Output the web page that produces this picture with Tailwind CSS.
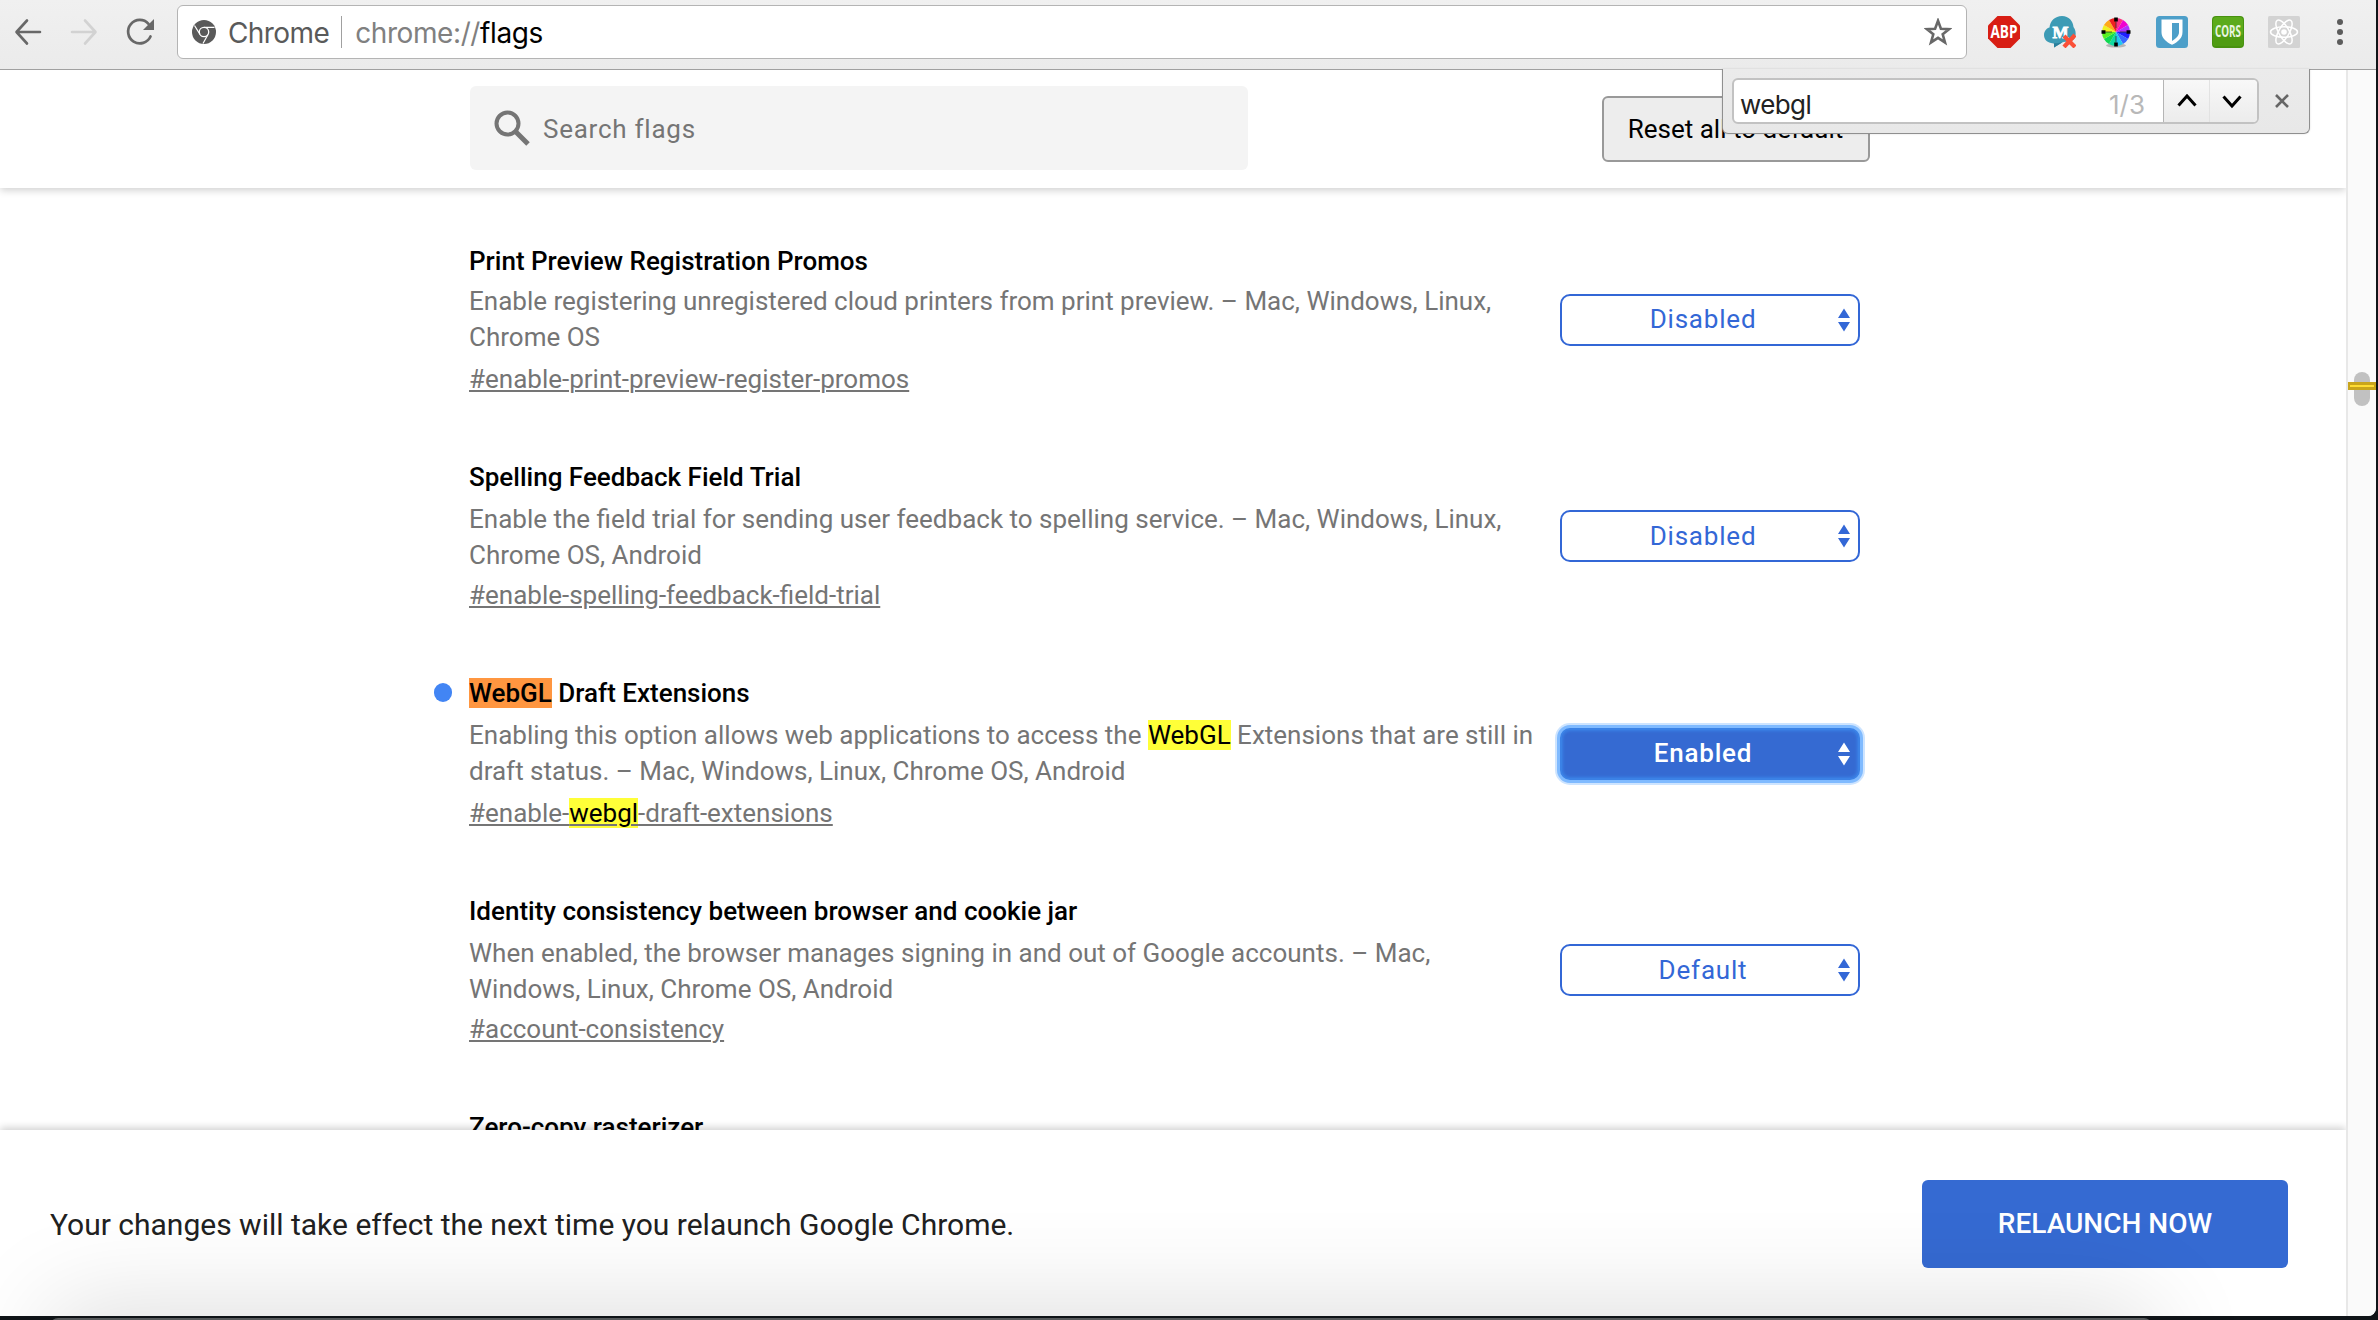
<!DOCTYPE html>
<html lang="en">
<head>
<meta charset="utf-8">
<title>chrome://flags</title>
<script src="https://cdn.jsdelivr.net/npm/@tailwindcss/browser@4"></script>
</head>
<body class="relative flex h-[1320px] w-[2378px] flex-col overflow-hidden bg-[#101418] font-['Roboto',sans-serif] text-[26px]">

<!-- Browser toolbar -->
<div class="flex h-[70px] w-[2376px] shrink-0 items-start border-b border-[#a0a0a0] bg-linear-to-b from-[#f0f0f0] to-[#ebebeb] font-['Inter',sans-serif] text-[28px]">
  <div class="flex h-16 w-[177px] shrink-0 items-center pl-[14px]">
    <svg class="h-7 w-7" viewBox="0 0 28 28" fill="none" stroke="#686868" stroke-width="2.6" stroke-linecap="round" stroke-linejoin="round"><path d="M26 14H3M13 2.5L2.5 14L13 25.500"/></svg>
    <svg class="ml-7 h-7 w-7" viewBox="0 0 28 28" fill="none" stroke="#d2d2d2" stroke-width="2.600" stroke-linecap="round" stroke-linejoin="round"><path d="M2 14H25M15 2.5L25.500 14L15 25.500"/></svg>
    <svg class="ml-7 h-7 w-7" viewBox="0 0 28 28" fill="none"><path d="M24.500 18.500A11.700 11.700 0 1 1 22.500 5.800" stroke="#686868" stroke-width="2.700" stroke-linecap="round"/><path d="M28 1V12H17Z" fill="#686868"/></svg>
  </div>
  <div class="mt-[5px] flex h-[54px] w-[1790px] shrink-0 items-center rounded-md border border-[#b4b4b4] bg-white pl-[14px] pr-[14px]">
    <svg class="h-6 w-6" viewBox="0 0 24 24"><circle cx="12" cy="12" r="12" fill="#5a5a5a"/><circle cx="12" cy="12" r="4.700" fill="#5a5a5a" stroke="#fff" stroke-width="1.300"/><path d="M12 7.300H22.500M8 14.400L2.500 5.500M16 14.500L11 23.500" stroke="#fff" stroke-width="1.200" fill="none"/></svg>
    <span class="ml-[12px] pt-0.5 tracking-[-0.6px] text-[#5a5a5a]">Chrome</span>
    <span class="ml-[12px] h-8 w-px bg-[#a0a0a0]"></span>
    <span class="ml-[13px] pt-0.5 tracking-[-0.4px] text-[#808080]">chrome://<span class="text-black">flags</span></span>
    <svg class="ml-auto h-7 w-7" viewBox="0 0 28 28"><path d="M14 2.800L16.900 10.700L25.200 11.100L18.700 16.300L21 24.400L14 19.800L7 24.400L9.300 16.300L2.800 11.100L11.100 10.700Z" fill="none" stroke="#686868" stroke-width="2.600"/></svg>
  </div>
  <div class="ml-[21px] mt-4 flex gap-6">
    <svg class="h-8 w-8" viewBox="0 0 32 32"><path d="M9.500 0H22.500L32 9.500V22.500L22.500 32H9.500L0 22.500V9.500Z" fill="#d81e14"/><text x="16" y="22" text-anchor="middle" textLength="27" lengthAdjust="spacingAndGlyphs" font-family="Open Sans" font-weight="700" font-size="17" fill="#fff">ABP</text></svg>
    <svg class="h-8 w-8" viewBox="0 0 32 32"><path d="M7 27C2 26 0 22.500 0 19C0 15 3 12 5.500 11.500C6 5 11 0 18 0C25 0 29 5 29.500 11C31.500 14 32 16 31.500 20C30 25 26 25 19 26L10 31.500L10 27.500Z" fill="#3d9bb5"/><path d="M7 27C14 28 24 26 31 21C30 25 26 25 19 26L10 31.500L10 27.500Z" fill="#2b7f9c"/><text x="16.500" y="21.500" text-anchor="middle" font-family="Liberation Serif" font-weight="700" font-size="17" fill="#fff" stroke="#fff" stroke-width=".8">M</text><path d="M20 20L31 31M31 19L20 31" stroke="#fa5038" stroke-width="4.200"/></svg>
    <svg class="h-8 w-8" viewBox="0 0 32 32"><ellipse cx="16" cy="29.500" rx="10" ry="2" fill="#b5b5b5"/>
      <path d="M16 16L16 2A14 14 0 0 1 23 3.900Z" fill="#ff3080"/><path d="M16 16L23 3.900A14 14 0 0 1 28.100 9Z" fill="#f000d0"/><path d="M16 16L28.100 9A14 14 0 0 1 30 16Z" fill="#b030ff"/><path d="M16 16L30 16A14 14 0 0 1 28.100 23Z" fill="#2020ff"/><path d="M16 16L28.100 23A14 14 0 0 1 23 28.100Z" fill="#3868ff"/><path d="M16 16L23 28.100A14 14 0 0 1 16 30Z" fill="#20c8f0"/><path d="M16 16L16 30A14 14 0 0 1 9 28.100Z" fill="#10d8a0"/><path d="M16 16L9 28.100A14 14 0 0 1 3.900 23Z" fill="#10d850"/><path d="M16 16L3.900 23A14 14 0 0 1 2 16Z" fill="#58f020"/><path d="M16 16L2 16A14 14 0 0 1 3.900 9Z" fill="#f0f020"/><path d="M16 16L3.900 9A14 14 0 0 1 9 3.900Z" fill="#ffa818"/><path d="M16 16L9 3.900A14 14 0 0 1 16 2Z" fill="#f02020"/>
      <path d="M16 1.500V5.500M16 26.500V30.500M1.500 16H5.500M26.500 16H30.500" stroke="#000" stroke-width="3.600"/><path d="M16 5V12M16 20V27M5 16H12M20 16H27" stroke="#333" stroke-width=".8"/></svg>
    <svg class="h-8 w-8" viewBox="0 0 32 32"><rect width="32" height="32" rx="3.500" fill="#4d9fc9"/><path d="M5.500 3.500H26.500V16C26.500 22 22 26 16 28.800C10 26 5.500 22 5.500 16Z" fill="#fff"/><path d="M16 7H23V16C23 20 20 22.500 16 25Z" fill="#4d9fc9"/></svg>
    <svg class="h-8 w-8" viewBox="0 0 32 32"><rect width="32" height="32" rx="4" fill="#48920f"/><rect x="1" y="1" width="30" height="29" rx="3.500" fill="#5cab1c"/><path d="M1 19Q16 14 31 19V27Q31 30 27 30H5Q1 30 1 27Z" fill="#4f9c12"/><text x="16" y="21" text-anchor="middle" textLength="26" lengthAdjust="spacingAndGlyphs" font-family="Open Sans" font-weight="700" font-size="16" fill="#e9f5e0">CORS</text></svg>
    <svg class="h-8 w-8" viewBox="0 0 32 32"><rect width="32" height="32" rx="1.500" fill="#d3d3d3"/><g fill="none" stroke="#fff" stroke-width="1.500"><ellipse cx="16" cy="16" rx="13.500" ry="5.200"/><ellipse cx="16" cy="16" rx="13.500" ry="5.200" transform="rotate(60 16 16)"/><ellipse cx="16" cy="16" rx="13.500" ry="5.200" transform="rotate(120 16 16)"/></g><circle cx="16" cy="16" r="2.800" fill="#fff"/></svg>
  </div>
  <div class="ml-[37px] mt-[19px] flex flex-col gap-1">
    <span class="h-1.5 w-1.5 rounded-full bg-[#5c5c5c]"></span><span class="h-1.5 w-1.5 rounded-full bg-[#5c5c5c]"></span><span class="h-1.5 w-1.5 rounded-full bg-[#5c5c5c]"></span>
  </div>
</div>

<div class="flex h-[1246px] w-[2376px] shrink-0 overflow-hidden rounded-br-lg bg-white">
  <!-- Page -->
  <div class="flex h-full w-[2346px] shrink-0 flex-col">
    <header class="z-10 flex h-[118px] shrink-0 items-start bg-white pl-[470px] pt-4 shadow-[0_2px_8px_rgba(0,0,0,0.2)]">
      <div class="flex h-[84px] w-[778px] items-center rounded-md bg-[#f4f4f4] pl-[24px] text-[#757575]">
        <svg class="h-9 w-9" viewBox="0 0 36 36" fill="none" stroke="#757575"><circle cx="13.500" cy="13.500" r="11" stroke-width="4"/><path d="M22 22L34 34" stroke-width="5"/></svg>
        <span class="ml-[13px] pt-0.5 tracking-[0.75px]">Search flags</span>
      </div>
      <div class="ml-[354px] mt-[10px] flex h-[66px] w-[268px] items-center justify-center rounded-md border-2 border-[#999] bg-[#ededed] pr-px text-black">Reset all to default</div>
    </header>

    <main class="flex min-h-0 flex-1 flex-col gap-[62px] overflow-hidden pl-[434px] pt-[55px] leading-9 text-[#757575]">
      <section class="flex shrink-0">
        <div class="w-[35px] shrink-0"></div>
        <div class="w-[1091px] whitespace-nowrap">
          <h3 class="font-medium text-black">Print Preview Registration Promos</h3>
          <p class="mt-1">Enable registering unregistered cloud printers from print preview. – Mac, Windows, Linux,<br>Chrome OS</p>
          <a class="mt-1.5 block underline decoration-2 underline-offset-2">#enable-print-preview-register-promos</a>
        </div>
        <div class="mt-[51px] flex h-[52px] w-[300px] items-center rounded-[10px] border-2 border-[#3367d6] pb-0.5 pr-2 tracking-[0.8px] text-[#3367d6]">
          <span class="flex-1 pl-[6px] text-center">Disabled</span>
          <svg class="mt-0.5 h-6 w-3" viewBox="0 0 12 24" fill="currentColor"><path d="M6 .5L12 10H0ZM6 23.500L12 14H0Z"/></svg>
        </div>
      </section>

      <section class="flex shrink-0">
        <div class="w-[35px] shrink-0"></div>
        <div class="w-[1091px] whitespace-nowrap">
          <h3 class="font-medium text-black">Spelling Feedback Field Trial</h3>
          <p class="mt-1.5">Enable the field trial for sending user feedback to spelling service. – Mac, Windows, Linux,<br>Chrome OS, Android</p>
          <a class="mt-1 block underline decoration-2 underline-offset-2">#enable-spelling-feedback-field-trial</a>
        </div>
        <div class="mt-[51px] flex h-[52px] w-[300px] items-center rounded-[10px] border-2 border-[#3367d6] pr-2 tracking-[0.8px] text-[#3367d6]">
          <span class="flex-1 pl-[6px] text-center">Disabled</span>
          <svg class="h-6 w-3" viewBox="0 0 12 24" fill="currentColor"><path d="M6 .5L12 10H0ZM6 23.500L12 14H0Z"/></svg>
        </div>
      </section>

      <section class="flex shrink-0">
        <div class="w-[35px] shrink-0"><div class="mt-[8px] h-[19px] w-[18px] rounded-full bg-[#4285f4]"></div></div>
        <div class="w-[1091px] whitespace-nowrap">
          <h3 class="font-medium text-black"><mark class="bg-[#ff9640] text-black">WebGL</mark> Draft Extensions</h3>
          <p class="mt-1.5">Enabling this option allows web applications to access the <mark class="bg-[#ffff38] text-black">WebGL</mark> Extensions that are still in<br>draft status. – Mac, Windows, Linux, Chrome OS, Android</p>
          <a class="mt-1.5 block underline decoration-2 underline-offset-2">#enable-<mark class="bg-[#ffff38] text-black">webgl</mark>-draft-extensions</a>
        </div>
        <div class="mt-[53px] flex h-[52px] w-[300px] items-center rounded-[10px] border-2 border-[#3b82e6] bg-[#356ad2] pb-0.5 pr-2 font-medium tracking-[0.8px] text-white shadow-[inset_0_0_3px_1px_#3b82e6,0_0_0_3px_#7fbaff,0_0_0_5px_#cde4ff]">
          <span class="flex-1 pl-[6px] text-center">Enabled</span>
          <svg class="mt-0.5 h-6 w-3" viewBox="0 0 12 24" fill="currentColor"><path d="M6 .5L12 10H0ZM6 23.500L12 14H0Z"/></svg>
        </div>
      </section>

      <section class="flex shrink-0">
        <div class="w-[35px] shrink-0"></div>
        <div class="w-[1091px] whitespace-nowrap">
          <h3 class="font-medium text-black">Identity consistency between browser and cookie jar</h3>
          <p class="mt-1.5">When enabled, the browser manages signing in and out of Google accounts. – Mac,<br>Windows, Linux, Chrome OS, Android</p>
          <a class="mt-1 block underline decoration-2 underline-offset-2">#account-consistency</a>
        </div>
        <div class="mt-[51px] flex h-[52px] w-[300px] items-center rounded-[10px] border-2 border-[#3367d6] pr-2 tracking-[0.8px] text-[#3367d6]">
          <span class="flex-1 pl-[6px] text-center">Default</span>
          <svg class="h-6 w-3" viewBox="0 0 12 24" fill="currentColor"><path d="M6 .5L12 10H0ZM6 23.500L12 14H0Z"/></svg>
        </div>
      </section>

      <section class="flex shrink-0 pl-[35px]">
        <h3 class="font-medium text-black">Zero-copy rasterizer</h3>
      </section>
    </main>

    <footer class="z-10 flex h-[186px] shrink-0 items-start justify-between bg-white pl-[50px] pr-[58px] pt-[50px] shadow-[0_-2px_8px_rgba(0,0,0,0.2)]">
      <p class="flex h-[88px] items-center text-[30px] text-[#212121]">Your changes will take effect the next time you relaunch Google Chrome.</p>
      <button class="h-[88px] w-[366px] rounded-md bg-[#356ad2] text-[28px] font-medium text-white">RELAUNCH NOW</button>
    </footer>
  </div>

  <!-- Scrollbar -->
  <div class="z-20 h-full w-[30px] border-l-2 border-[#e8e8e8] bg-[#fafafa] pt-[302px]">
    <div class="ml-1.5 flex h-[34px] w-4 flex-col rounded-full bg-[#c1c1c1] pt-[10px]">
      <div class="-ml-1.5 flex h-2 w-7 shrink-0 items-center justify-center bg-[#c9a51c]"><div class="h-0.5 w-6 bg-[#ffdd33]"></div></div>
    </div>
  </div>
</div>

<!-- Find bar -->
<div class="absolute left-[1722px] top-[69px] z-30 flex h-[65px] w-[588px] rounded-b-md border border-t-0 border-[#8f8f8f] bg-linear-to-b from-[#ebebeb] to-[#e8e8e8] pl-[9px] pt-[9px] font-['Inter',sans-serif] shadow-[0_0_2px_rgba(0,0,0,0.15)]">
  <div class="flex h-[46px] w-[527px] overflow-hidden rounded-md border-2 border-[#c2c2c2] bg-white">
    <div class="flex w-[430px] items-center justify-between border-r border-[#b5b5b5] pl-1.5 pr-[18px] pt-[6px]">
      <span class="tracking-[-0.6px] text-[#222]">webgl</span>
      <span class="text-[#b8b8b8]">1/3</span>
    </div>
    <div class="flex w-[46px] items-center justify-center border-r border-[#e2e2e2] bg-linear-to-b from-[#f8f8f8] to-[#ececec]">
      <svg class="h-5 w-5" viewBox="0 0 20 20" fill="none" stroke="#000" stroke-width="3"><path d="M1.500 14.500L10 5L18.500 14.500"/></svg>
    </div>
    <div class="flex flex-1 items-center justify-center bg-linear-to-b from-[#f8f8f8] to-[#ececec] pr-1">
      <svg class="h-5 w-5" viewBox="0 0 20 20" fill="none" stroke="#000" stroke-width="3"><path d="M1.500 5.500L10 15L18.500 5.500"/></svg>
    </div>
  </div>
  <svg class="ml-4 mt-4 h-[14px] w-[14px]" viewBox="0 0 14 14" stroke="#666" stroke-width="2.600"><path d="M1 1L13 13M13 1L1 13"/></svg>
</div>

<!-- Window peeking in from below, with its shadow -->
<div class="pointer-events-none absolute inset-0 z-20 overflow-hidden">
  <div class="ml-[50px] mt-[1318px] h-[300px] w-[2102px] rounded-lg bg-[#56595b] shadow-[0_-14px_100px_rgba(0,0,0,0.13)]"></div>
</div>
</body>
</html>
